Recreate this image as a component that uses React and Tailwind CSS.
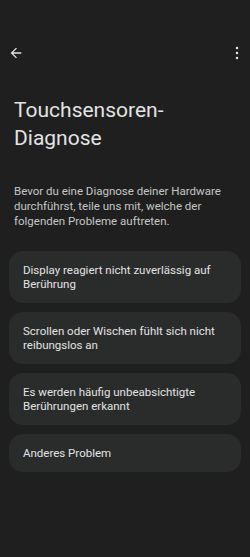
import React from "react";

const options = [
  "Display reagiert nicht zuverlässig auf Berührung",
  "Scrollen oder Wischen fühlt sich nicht reibungslos an",
  "Es werden häufig unbeabsichtigte Berührungen erkannt",
  "Anderes Problem",
];

const App = () => {
  return (
    <div
      className="w-[250px] h-[557px] bg-[#1f1f1f] overflow-hidden"
      style={{ fontFamily: "Roboto, 'Noto Sans', sans-serif" }}
    >
      {/* top bar */}
      <div className="flex items-center justify-between h-6 mt-[41px] pl-[8px] pr-[5px]">
        <svg width="16" height="16" viewBox="0 0 24 24" fill="#e3e3e3">
          <path d="M20 11H7.83l5.59-5.59L12 4l-8 8 8 8 1.41-1.41L7.83 13H20v-2z" />
        </svg>
        <svg width="16" height="16" viewBox="0 0 24 24" fill="#e3e3e3">
          <circle cx="12" cy="4.5" r="1.9" />
          <circle cx="12" cy="12" r="1.9" />
          <circle cx="12" cy="19.5" r="1.9" />
        </svg>
      </div>

      <h1 className="mt-[31px] px-[14px] text-[21px] leading-[28px] text-[#e3e3e3] font-normal">
        Touchsensoren-
        <br />
        Diagnose
      </h1>

      <p className="mt-[32px] px-[14px] text-[11.5px] leading-[15px] text-[#c4c7c5]">
        Bevor du eine Diagnose deiner Hardware durchführst, teile uns mit, welche der folgenden Probleme auftreten.
      </p>

      <div className="mt-[22px] px-[9px] flex flex-col gap-[9px]">
        {options.map((opt) => (
          <div
            key={opt}
            className="bg-[#2a2b2b] rounded-[14px] pl-[14px] pr-[20px] py-[12px] text-[11.5px] leading-[14px] text-[#e3e3e3]"
          >
            {opt}
          </div>
        ))}
      </div>
    </div>
  );
};

export default App;
